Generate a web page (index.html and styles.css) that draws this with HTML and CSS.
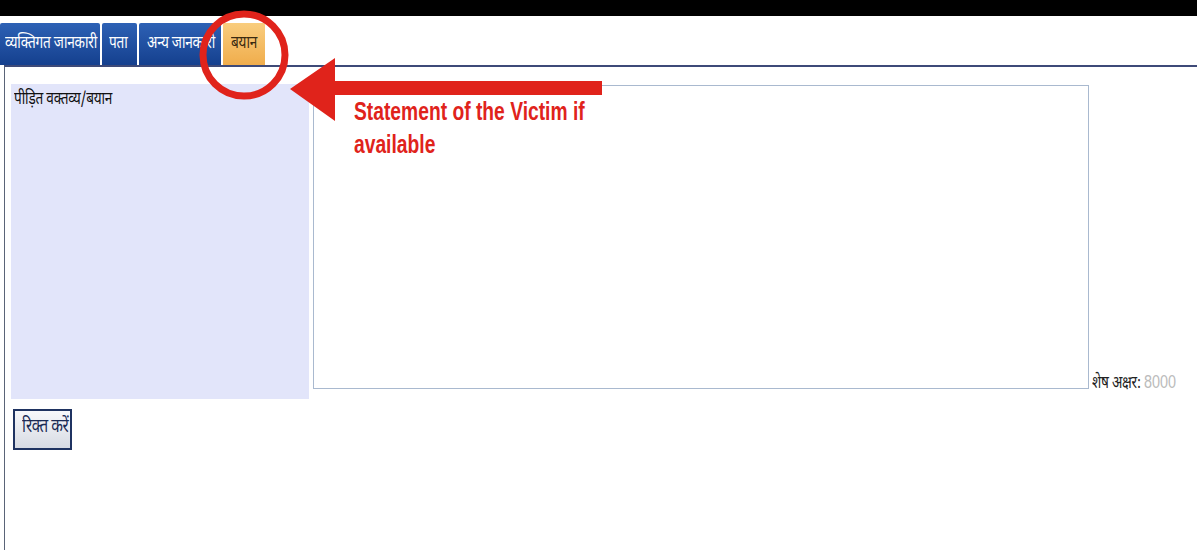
FILE: index.html
```html
<html lang="hi">
    <head>
        <meta charset="UTF-8">
        <title>बयान</title>
        <link rel="stylesheet" href="styles.css">
    </head>
    <body>
        <div class="topbar"></div>
        <ul class="tabs">
            <li class="tab tab-personal"><span class="narrow">व्यक्तिगत जानकारी</span></li>
            <li class="tab tab-address"><span class="narrow">पता</span></li>
            <li class="tab tab-other"><span class="narrow">अन्य जानकारी</span></li>
            <li class="tab tab-statement active"><span class="narrow">बयान</span></li>
        </ul>
        <div class="panel">
            <div class="row">
                <div class="label"><span class="narrow">पीड़ित वक्तव्य/बयान</span></div>
                <textarea class="statement"></textarea>
                <div class="counter"><span class="narrow">शेष अक्षर: <span class="count">8000</span></span></div>
            </div>
            <button class="clear"><span class="narrow">रिक्त करें</span></button>
        </div>

        <!-- annotation drawn over the page -->
        <svg class="marks" width="700" height="130" viewBox="0 0 700 130">
            <circle cx="244" cy="55" r="41" fill="none" stroke="#e0231b" stroke-width="7"/>
            <polygon points="290,89 335,58 335,81 602,81 602,95 335,95 335,121" fill="#e0231b"/>
        </svg>
        <div class="note"><span class="narrow">Statement of the Victim if<br>available</span></div>
    </body>
</html>
```
FILE: styles.css
```css
body {
    margin: 0;
    padding: 0;
    background-color: #ffffff;
    font-family: 'Noto Sans Devanagari', 'Noto Sans', 'Liberation Sans', sans-serif;
    position: relative;
    height: 550px;
    overflow: hidden;
}
.narrow {
    display: inline-block;
    transform: scaleX(0.8);
    transform-origin: left center;
    white-space: nowrap;
}
.topbar {
    height: 16px;
    background: #000000;
}
.tabs {
    list-style: none;
    margin: 7px 0 0 0;
    padding: 0;
    display: flex;
    gap: 2px;
    height: 42px;
}
.tab {
    display: flex;
    align-items: center;
    box-sizing: border-box;
    padding: 0 0 0 5px;
    color: #ffffff;
    font-size: 17px;
    letter-spacing: -0.3px;
    background: linear-gradient(#2d61b5, #15408e);
    border-radius: 2px 2px 0 0;
}
.tab-personal { width: 100px; }
.tab-address { width: 35px; padding-left: 7px; }
.tab-other { width: 82px; padding-left: 8px; }
.tab-statement { width: 42px; padding-left: 8px; }
.tab.active {
    color: #3a2a10;
    background: linear-gradient(#f9cd7e, #f0ad4c);
}
.panel {
    border-top: 2px solid #3e4a78;
    border-left: 1px solid #5a6478;
    margin-left: 4px;
    height: 500px;
    padding: 17px 0 0 6px;
    box-sizing: border-box;
}
.row {
    display: flex;
    align-items: flex-start;
    gap: 4px;
}
.label {
    width: 292px;
    height: 310px;
    padding: 5px 3px 0 3px;
    background: #e2e5fa;
    font-size: 17px;
    letter-spacing: -0.3px;
    color: #111111;
}
.statement {
    width: 777px;
    height: 304px;
    margin: 1px 0 0 0;
    border: 1px solid #a9b9cf;
    box-sizing: border-box;
    resize: none;
}
.counter {
    margin: 288px 0 0 -1px;
    font-size: 17px;
    letter-spacing: -0.3px;
    color: #222222;
}
.count {
    color: #bbbbbb;
    font-family: 'Liberation Sans', sans-serif;
    font-size: 18px;
    letter-spacing: 0;
}
.clear {
    display: block;
    margin: 10px 0 0 2px;
    width: 59px;
    height: 41px;
    border: 2px solid #1f3361;
    background: linear-gradient(#f7f8fb, #d7dbe3);
    color: #1b2b55;
    font-family: inherit;
    font-size: 19px;
    letter-spacing: -0.5px;
    padding: 0 0 4px 7px;
    text-align: left;
    overflow: visible;
}
.marks {
    position: absolute;
    left: 0;
    top: 0;
}
.note {
    position: absolute;
    left: 354px;
    top: 95px;
    color: #e0231b;
    font-family: 'Liberation Sans', sans-serif;
    font-weight: bold;
    font-size: 25px;
    line-height: 33px;
}
.note .narrow {
    transform: scaleX(0.77);
}
```
